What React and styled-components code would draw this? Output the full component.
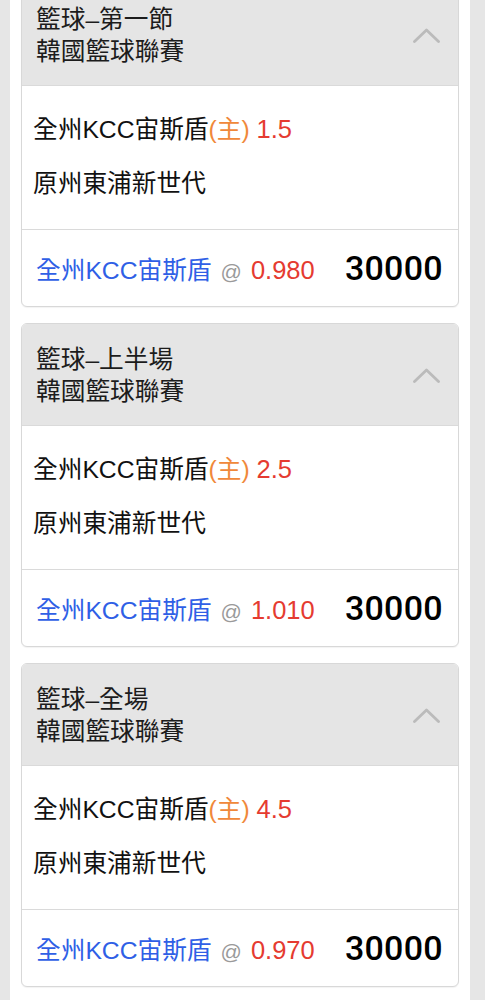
import React from "react";
import styled, { createGlobalStyle } from "styled-components";

const Global = createGlobalStyle`
  html, body { margin: 0; padding: 0; background: #e6e6e6; }
  body { font-family: "Liberation Sans", "Noto Sans CJK TC", sans-serif; }
`;

const Panel = styled.div`
  margin: 0 15px 0 10px;
  background: #ffffff;
  padding: 0 11px 16px;
  min-height: 1000px;
  box-sizing: border-box;
  overflow: hidden;
`;

const List = styled.div`
  display: flex;
  flex-direction: column;
  gap: 16px;
  margin-top: -17px;
`;

const Card = styled.div`
  border: 1px solid #d8d8d8;
  border-radius: 6px;
  overflow: hidden;
  background: #fff;
  box-shadow: 0 1px 1px rgba(0, 0, 0, 0.05);
`;

const Header = styled.div`
  display: flex;
  align-items: flex-start;
  justify-content: space-between;
  background: #e5e5e5;
  height: 102px;
  box-sizing: border-box;
  padding: 20px 18px 0 14px;
  border-bottom: 1px solid #dadada;
`;

const Titles = styled.div`
  display: flex;
  flex-direction: column;
  font-size: 24.7px;
  color: #1c1c1c;
`;

const TitleLine = styled.div`
  height: 32px;
  line-height: 32px;
  white-space: nowrap;
`;

const Chevron = styled.svg`
  width: 27px;
  height: 15px;
  display: block;
  align-self: center;
  margin-top: -18px;
`;

const Body = styled.div`
  display: flex;
  flex-direction: column;
  gap: 23px;
  height: 144px;
  box-sizing: border-box;
  padding: 27px 11px 0;
  font-size: 24.7px;
  color: #111;
  border-bottom: 1px solid #dadada;
`;

const Row = styled.div`
  height: 32px;
  line-height: 32px;
  white-space: nowrap;
`;

const Orange = styled.span`
  color: #f0883a;
`;

const Red = styled.span`
  color: #e53b30;
  font-size: 25.5px;
`;

const Footer = styled.div`
  display: flex;
  align-items: center;
  justify-content: space-between;
  height: 76px;
  box-sizing: border-box;
  padding: 0 15px 1px 14px;
`;

const Pick = styled.div`
  font-size: 24.7px;
  display: flex;
  align-items: baseline;
  gap: 9px;
  white-space: nowrap;
`;

const Blue = styled.span`
  color: #2f5fe6;
`;

const At = styled.span`
  color: #9a9a9a;
  font-size: 21px;
`;

const Stake = styled.div`
  font-family: Roboto, "Liberation Sans", sans-serif;
  font-weight: 500;
  font-size: 34px;
  color: #000;
  letter-spacing: 0.3px;
`;

const data = [
  { title: "籃球–第一節", line: "1.5", odds: "0.980" },
  { title: "籃球–上半場", line: "2.5", odds: "1.010" },
  { title: "籃球–全場", line: "4.5", odds: "0.970" },
];

export default function App() {
  return (
    <>
      <Global />
      <Panel>
        <List>
          {data.map((d) => (
            <Card key={d.title}>
              <Header>
                <Titles>
                  <TitleLine>{d.title}</TitleLine>
                  <TitleLine>韓國籃球聯賽</TitleLine>
                </Titles>
                <Chevron viewBox="0 0 27 15">
                  <path
                    d="M1.5 13.5 L13.5 2 L25.5 13.5"
                    fill="none"
                    stroke="#bbbbbb"
                    strokeWidth="2.8"
                    strokeLinecap="round"
                    strokeLinejoin="round"
                  />
                </Chevron>
              </Header>
              <Body>
                <Row>
                  全州KCC宙斯盾<Orange>(主)</Orange> <Red>{d.line}</Red>
                </Row>
                <Row>原州東浦新世代</Row>
              </Body>
              <Footer>
                <Pick>
                  <Blue>全州KCC宙斯盾</Blue>
                  <At>@</At>
                  <Red>{d.odds}</Red>
                </Pick>
                <Stake>30000</Stake>
              </Footer>
            </Card>
          ))}
        </List>
      </Panel>
    </>
  );
}
